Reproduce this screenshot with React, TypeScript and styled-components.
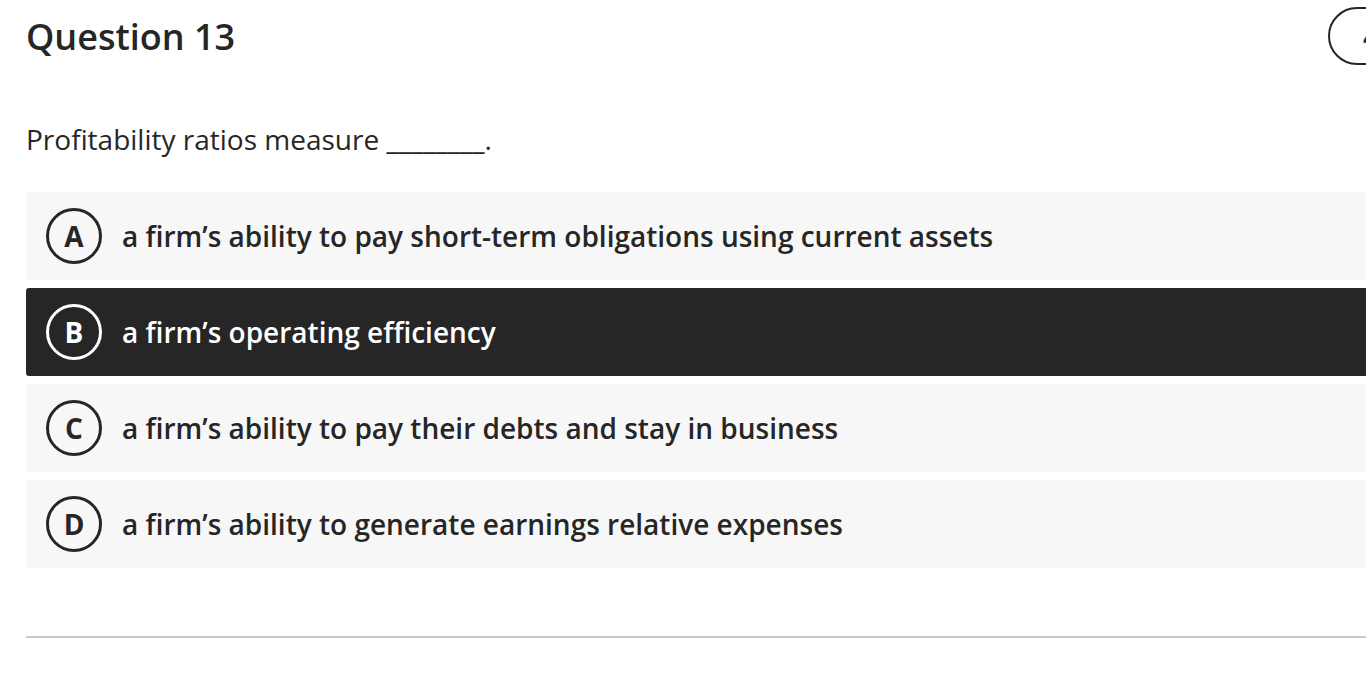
import React from "react";
import styled, { createGlobalStyle } from "styled-components";

const Global = createGlobalStyle`
  html, body { margin: 0; padding: 0; background: #ffffff; overflow: hidden; }
  body { font-family: "Open Sans", "Noto Sans", sans-serif; color: #262626; }
`;

const Page = styled.div`
  width: 1440px;
  padding-left: 26px;
  display: flex;
  flex-direction: column;
`;

const Header = styled.header`
  display: flex;
  align-items: center;
  justify-content: space-between;
  padding-top: 7px;
  height: 58px;
`;

const Title = styled.h1`
  margin: 0;
  font-size: 36px;
  font-weight: 600;
  line-height: 49px;
  color: #262626;
`;

const Points = styled.div`
  box-sizing: border-box;
  height: 58px;
  width: 138px;
  border: 2px solid #262626;
  border-radius: 29px;
  padding-left: 33px;
  display: flex;
  align-items: center;
  font-size: 28px;
  font-weight: 600;
  white-space: nowrap;
`;

const Prompt = styled.p`
  margin: 56px 0 0;
  font-size: 28px;
  line-height: 36px;
  font-weight: 400;
`;

const Options = styled.div`
  margin-top: 35px;
  display: flex;
  flex-direction: column;
  gap: 8px;
`;

const Option = styled.div<{ $selected?: boolean }>`
  box-sizing: border-box;
  height: 88px;
  border-radius: 3px;
  padding-left: 20px;
  display: flex;
  align-items: center;
  gap: 20px;
  background: ${(p) => (p.$selected ? "#262626" : "#f7f7f7")};
  color: ${(p) => (p.$selected ? "#ffffff" : "#262626")};
`;

const Letter = styled.span<{ $selected?: boolean }>`
  box-sizing: border-box;
  flex: none;
  width: 56px;
  height: 56px;
  border-radius: 50%;
  border: 3px solid ${(p) => (p.$selected ? "#ffffff" : "#262626")};
  display: flex;
  align-items: center;
  justify-content: center;
  font-size: 28px;
  font-weight: 700;
  line-height: 1;
`;

const OptionText = styled.span`
  font-size: 28px;
  font-weight: 600;
  line-height: 36px;
  white-space: nowrap;
`;

const Divider = styled.hr`
  margin: 68px 0 0;
  border: none;
  height: 2px;
  background: #c8c8c8;
`;

const options = [
  { key: "A", text: "a firm’s ability to pay short-term obligations using current assets" },
  { key: "B", text: "a firm’s operating efficiency", selected: true },
  { key: "C", text: "a firm’s ability to pay their debts and stay in business" },
  { key: "D", text: "a firm’s ability to generate earnings relative expenses" },
];

export default function App() {
  return (
    <>
      <Global />
      <Page>
        <Header>
          <Title>Question 13</Title>
          <Points>4 points</Points>
        </Header>
        <Prompt>Profitability ratios measure ________.</Prompt>
        <Options>
          {options.map((o) => (
            <Option key={o.key} $selected={o.selected}>
              <Letter $selected={o.selected}>{o.key}</Letter>
              <OptionText>{o.text}</OptionText>
            </Option>
          ))}
        </Options>
        <Divider />
      </Page>
    </>
  );
}
